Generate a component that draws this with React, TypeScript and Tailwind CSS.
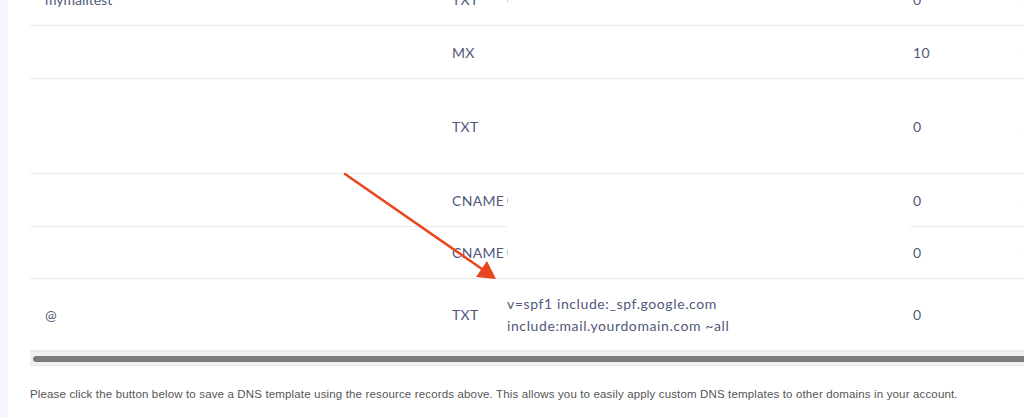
import React from 'react';

type Row = {
  name?: string;
  type: string;
  value?: string[];
  prio: string;
  ttl: string;
  h: string;
  stub?: boolean;
  gap?: boolean;
};

const rows: Row[] = [
  { name: 'mymailtest', type: 'TXT', prio: '0', ttl: '3600', h: 'h-[53px]', stub: true },
  { type: 'MX', prio: '10', ttl: '3600', h: 'h-[53px]' },
  { type: 'TXT', prio: '0', ttl: '3600', h: 'h-[95px]' },
  { type: 'CNAME', prio: '0', ttl: '3600', h: 'h-[53px]', stub: true },
  { type: 'CNAME', prio: '0', ttl: '3600', h: 'h-[52px]', stub: true, gap: true },
  {
    name: '@',
    type: 'TXT',
    value: ['v=spf1 include:_spf.google.com', 'include:mail.yourdomain.com ~all'],
    prio: '0',
    ttl: '1',
    h: 'h-[72px]',
  },
];

function RecordRow({ row }: { row: Row }) {
  return (
    <div
      className={`relative grid grid-cols-[407px_55px_406px_107px_200px] items-center border-b border-[#ebebeb] ${row.h}`}
    >
      {/* redacted strip hides the line between the two CNAME rows */}
      {row.gap && <div className="absolute left-[477px] top-[-1px] h-[1px] w-[403px] bg-white" />}
      <div className="pl-[15px]">{row.name}</div>
      <div className="pl-[15px] tracking-[0.3px]">{row.type}</div>
      <div className="pl-[15px] leading-[22px] tracking-[0.6px]">
        {row.value
          ? row.value.map((line) => <div key={line}>{line}</div>)
          : row.stub && <span className="block h-[5px] w-[1px] bg-[#c3c7d3]" />}
      </div>
      <div className="pl-[15px] tracking-[0.4px]">{row.prio}</div>
      <div className="pl-[18px] text-[#c9cdd8]">{row.ttl}</div>
    </div>
  );
}

export default function App() {
  return (
    <div className="flex h-[417px] w-[1024px] overflow-hidden bg-white">
      <div className="w-[8px] shrink-0 bg-[#f5f7fc]" />
      <div className="relative flex min-w-0 flex-1 flex-col pl-[22px]">
        <div
          className="-mt-[27px] overflow-hidden text-[14px] text-[#4f597b]"
          style={{ fontFamily: 'Lato, "Open Sans", sans-serif' }}
        >
          {rows.map((row, i) => (
            <RecordRow key={i} row={row} />
          ))}
          <div className="h-[15px] border-y border-[#e6e6e6] bg-[#f1f1f1] pl-[3px] pt-[4px]">
            <div className="h-[6px] w-[1200px] rounded-full bg-[#7c7c7c]" />
          </div>
        </div>
        <p
          className="mt-[20px] text-[11.5px] tracking-[0.15px] text-[#555555]"
          style={{ fontFamily: '"Liberation Sans", Arial, sans-serif' }}
        >
          Please click the button below to save a DNS template using the resource records above. This allows you to easily apply custom DNS templates to other domains in your account.
        </p>

        {/* annotation arrow drawn over the table */}
        <svg
          className="pointer-events-none absolute left-[-8px] top-0"
          width="1024"
          height="417"
          viewBox="0 0 1024 417"
        >
          <line x1="345" y1="174" x2="482" y2="269" stroke="#e8461f" strokeWidth="2.6" strokeLinecap="round" />
          <polygon points="496,279 476,277 487,261" fill="#e8461f" />
        </svg>
      </div>
    </div>
  );
}
